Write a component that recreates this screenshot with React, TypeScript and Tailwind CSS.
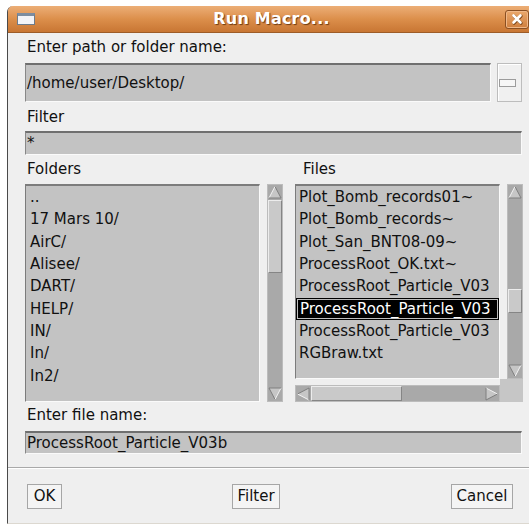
import React from "react";

const folders = ["..", "17 Mars 10/", "AirC/", "Alisee/", "DART/", "HELP/", "IN/", "In/", "In2/"];
const files = [
  "Plot_Bomb_records01~",
  "Plot_Bomb_records~",
  "Plot_San_BNT08-09~",
  "ProcessRoot_OK.txt~",
  "ProcessRoot_Particle_V03",
  "ProcessRoot_Particle_V03",
  "ProcessRoot_Particle_V03",
  "RGBraw.txt",
];

type Dir = "up" | "down" | "left" | "right";

function Arrow({ dir }: { dir: Dir }) {
  const rot =
    dir === "up" ? "" : dir === "down" ? "rotate-180" : dir === "left" ? "-rotate-90" : "rotate-90";
  return (
    <svg width="14" height="14" viewBox="0 0 14 14" className={`shrink-0 ${rot}`}>
      <polygon points="7,1.5 1,13 13,13" fill="#c6c6c6" />
      <line x1="1" y1="13" x2="7" y2="1.5" stroke="#f2f2f2" strokeWidth="1" />
      <line x1="7" y1="1.5" x2="13" y2="13" stroke="#7e7e7e" strokeWidth="1" />
      <line x1="1" y1="13" x2="13" y2="13" stroke="#7e7e7e" strokeWidth="1" />
    </svg>
  );
}

function Thumb({ size, vertical }: { size: number; vertical: boolean }) {
  return (
    <div
      className="shrink-0 bg-[#c9c9c9] border-t border-l border-t-[#ececec] border-l-[#ececec] border-b border-r border-b-[#858585] border-r-[#858585]"
      style={vertical ? { height: size, width: "100%" } : { width: size, height: "100%" }}
    />
  );
}

function VScroll({ height, before, thumb }: { height: number; before: number; thumb: number }) {
  return (
    <div
      className="w-[16px] flex flex-col items-center bg-[#a9a9a9] border border-[#bcbcbc] shrink-0"
      style={{ height }}
    >
      <Arrow dir="up" />
      <div className="w-full shrink-0" style={{ height: before }} />
      <Thumb size={thumb} vertical />
      <div className="flex-1" />
      <Arrow dir="down" />
    </div>
  );
}

function HScroll({ width, before, thumb }: { width: number; before: number; thumb: number }) {
  return (
    <div
      className="h-[17px] flex items-center bg-[#a9a9a9] border border-[#bcbcbc] shrink-0"
      style={{ width }}
    >
      <Arrow dir="left" />
      <div className="h-full shrink-0" style={{ width: before }} />
      <Thumb size={thumb} vertical={false} />
      <div className="flex-1" />
      <Arrow dir="right" />
    </div>
  );
}

const fieldCls =
  "bg-[#c3c3c3] border-t-2 border-l border-t-[#6f6f6f] border-l-[#888888] border-b border-r border-b-[#fafafa] border-r-[#fafafa] flex items-center pl-[1px] whitespace-nowrap overflow-hidden";

const listCls =
  "bg-[#c3c3c3] border-t-2 border-l border-t-[#7c7c7c] border-l-[#7c7c7c] border-b border-r border-b-[#fafafa] border-r-[#fafafa] flex flex-col overflow-hidden shrink-0";

function Button({ label, width }: { label: string; width: number }) {
  return (
    <div
      className="h-[25px] flex items-center justify-center bg-[#f4f4f4] border border-[#a6a6a6] shrink-0"
      style={{ width }}
    >
      {label}
    </div>
  );
}

export default function App() {
  return (
    <div className="w-[529px] h-[527px] bg-white overflow-hidden font-['DejaVu_Sans',sans-serif] text-[15px] text-[#111]">
      <div className="ml-[7px] mt-[6px] w-[528px] flex flex-col bg-[#efefef] border-l border-l-[#4a4a4a] border-b border-b-[#dcd8d0] rounded-tl-[6px]">
        {/* title bar */}
        <div className="h-[27px] flex items-center rounded-tl-[5px] bg-linear-to-b from-[#ecae76] via-[#dc8f4b] to-[#c87633] border-b border-b-[#9d5c28]">
          <div className="w-[40px] pl-[9px] flex items-center">
            <div className="w-[18px] h-[12px] bg-[#f3f4f8] border border-[#6d7c8c] border-t-[3px] border-t-[#7d8da0]" />
          </div>
          <div className="flex-1 text-center font-bold text-[16px] text-white [text-shadow:1px_1px_1px_#6e3a12] tracking-[0.2px]">
            Run Macro...
          </div>
          <div className="w-[40px] pr-[6px] flex justify-end items-center">
            <div className="w-[24px] h-[19px] rounded-[3px] border border-[#8a4f22] bg-linear-to-b from-[#eaa86c] to-[#cf7f3e] flex items-center justify-center shadow-[inset_0_0_0_1px_#f0b888]">
              <svg width="12" height="12" viewBox="0 0 12 12">
                <path d="M2.5 2.5 L9.5 9.5 M9.5 2.5 L2.5 9.5" stroke="#7a4418" strokeWidth="3" strokeLinecap="round" transform="translate(0.6 0.6)" />
                <path d="M2.5 2.5 L9.5 9.5 M9.5 2.5 L2.5 9.5" stroke="#ffffff" strokeWidth="2.6" strokeLinecap="round" />
              </svg>
            </div>
          </div>
        </div>

        {/* dialog body */}
        <div className="flex flex-col pl-[17px]">
          <div className="mt-[5px] h-[18px] leading-[18px] pl-[2px]">Enter path or folder name:</div>
          <div className="mt-[7px] flex h-[39px]">
            <div className={`${fieldCls} w-[466px] h-full`}>/home/user/Desktop/</div>
            <div className="ml-[6px] w-[25px] h-full bg-[#f0f0f0] border border-[#bdbdbd] shadow-[inset_1px_1px_0_#ffffff] flex items-center pl-[1px]">
              <div className="w-[17px] h-[8px] bg-[#f6f6f6] border border-[#9c9c9c]" />
            </div>
          </div>

          <div className="mt-[6px] h-[18px] leading-[18px] pl-[2px]">Filter</div>
          <div className={`${fieldCls} mt-[5px] w-[497px] h-[24px]`}>*</div>

          <div className="mt-[5px] h-[18px] leading-[18px] flex">
            <div className="w-[270px] pl-[2px]">Folders</div>
            <div className="pl-[8px]">Files</div>
          </div>

          <div className="mt-[6px] flex h-[218px]">
            <div className={`${listCls} w-[235px] h-full`}>
              {folders.map((f, i) => (
                <div key={i} className="h-[22.33px] shrink-0 flex items-center pl-[4px] whitespace-nowrap">
                  {f}
                </div>
              ))}
            </div>
            <div className="ml-[7px]">
              <VScroll height={218} before={1} thumb={73} />
            </div>
            <div className="ml-[12px] w-[228px] flex flex-col">
              <div className="flex h-[195px]">
                <div className={`${listCls} w-[205px] h-full`}>
                  {files.map((f, i) =>
                    i === 5 ? (
                      <div key={i} className="h-[22.33px] shrink-0 bg-black border border-black">
                        <div className="h-full flex items-center pl-[2px] text-white whitespace-nowrap border border-[#bdbdbd]">
                          {f}
                        </div>
                      </div>
                    ) : (
                      <div key={i} className="h-[22.33px] shrink-0 flex items-center pl-[3px] whitespace-nowrap">
                        {f}
                      </div>
                    )
                  )}
                </div>
                <div className="ml-[7px]">
                  <VScroll height={195} before={90} thumb={24} />
                </div>
              </div>
              <div className="flex h-[23px]">
                <div className="mt-[6px]">
                  <HScroll width={205} before={1} thumb={91} />
                </div>
                <div className="w-[23px] h-full bg-[#c6c6c6]" />
              </div>
            </div>
          </div>

          <div className="mt-[4px] h-[18px] leading-[18px] pl-[2px]">Enter file name:</div>
          <div className={`${fieldCls} mt-[7px] w-[497px] h-[23px]`}>ProcessRoot_Particle_V03b</div>
        </div>

        {/* etched separator */}
        <div className="mt-[13px] h-[2px] border-t border-t-[#a9a9a9] border-b border-b-[#ffffff]" />

        {/* action buttons */}
        <div className="mt-[15px] mb-[14px] flex pl-[19px]">
          <Button label="OK" width={35} />
          <div className="ml-[170px]">
            <Button label="Filter" width={48} />
          </div>
          <div className="ml-[171px]">
            <Button label="Cancel" width={62} />
          </div>
        </div>
      </div>
    </div>
  );
}
